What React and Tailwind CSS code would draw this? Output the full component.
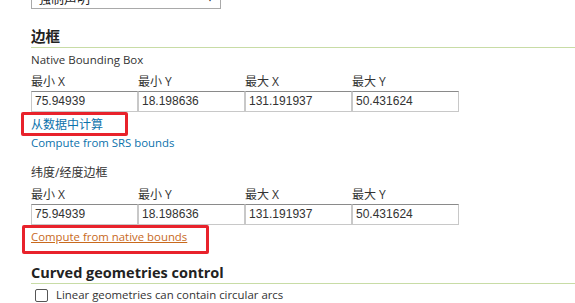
import React from 'react'

// ── Bounding box field row ─────────────────────────────────────────────────
const COLS = ['最小 X', '最小 Y', '最大 X', '最大 Y']
const VALUES = ['75.94939', '18.198636', '131.191937', '50.431624']

function BBoxFields() {
  return (
    <div>
      <div className="flex mt-[6px]">
        {COLS.map(c => (
          <div key={c} className="w-[107px] text-[12px] leading-[16px] text-[#333]">{c}</div>
        ))}
      </div>
      <div className="flex mt-[1px]">
        {VALUES.map(v => (
          <div key={v}
            className="w-[107px] h-[21px] border border-[#c8c8c8] border-t-[#8a8a8a] bg-white px-[3px]
                       text-[12px] leading-[19px] text-[#333] font-['Liberation_Sans',Arial,sans-serif]">
            {v}
          </div>
        ))}
      </div>
    </div>
  )
}

function SectionTitle({ children, className = '' }) {
  return (
    <h2 className={`text-[14.5px] leading-[20px] font-bold text-[#222] border-b border-[#c8dca6] ${className}`}>
      {children}
    </h2>
  )
}

export default function App() {
  return (
    <div className="w-[575px] h-[303px] overflow-hidden bg-white pl-[31px]
                    font-['Open_Sans','Noto_Sans_CJK_SC',sans-serif]">
      {/* SRS handling select, scrolled mostly out of view */}
      <div className="relative w-[190px] h-[22px] -mt-[13px] border border-[#a9a9a9] bg-white
                      text-[13px] leading-[20px] pl-[6px] text-[#222]">
        强制声明
        <span className="absolute right-[6px] top-[6px] text-[8px] leading-none">▼</span>
      </div>

      <SectionTitle className="mt-[18px]">边框</SectionTitle>
      <div className="mt-[4px] text-[11.5px] leading-[16px] text-[#333]">Native Bounding Box</div>
      <BBoxFields />

      <div className="mt-[4px] relative w-fit">
        <a className="block text-[12px] leading-[18px] text-[#0b72ac]">从数据中计算</a>
        <div className="absolute -left-[10px] -top-[4px] w-[107px] h-[24px] border-[3px] border-[#e8222b] rounded-[2px]" />
      </div>
      <a className="block text-[11.4px] leading-[18px] text-[#0b72ac]">Compute from SRS bounds</a>

      <div className="mt-[13px] text-[12px] leading-[16px] text-[#333]">纬度/经度边框</div>
      <BBoxFields />

      <div className="mt-[3px] relative w-fit">
        <a className="block text-[11.4px] leading-[18px] text-[#c8691c] underline">Compute from native bounds</a>
        <div className="absolute -left-[9px] -top-[3px] w-[187px] h-[29px] border-[3px] border-[#e8222b] rounded-[2px]" />
      </div>

      <SectionTitle className="mt-[17px]">Curved geometries control</SectionTitle>
      <label className="mt-[3px] flex items-center gap-[8px] pl-[4px] text-[11.4px] leading-[16px] text-[#333]">
        <span className="w-[13px] h-[13px] border border-[#555] rounded-[2px] bg-white" />
        Linear geometries can contain circular arcs
      </label>
    </div>
  )
}
